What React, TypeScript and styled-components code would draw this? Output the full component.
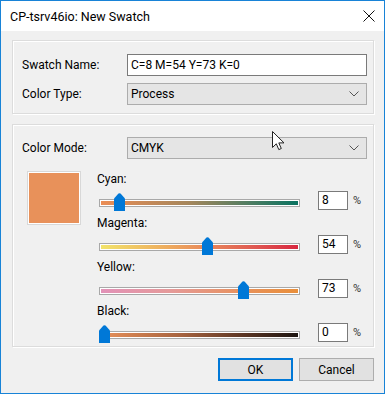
import React from "react";
import styled, { createGlobalStyle } from "styled-components";

const GlobalStyle = createGlobalStyle`
  html, body {
    margin: 0;
    padding: 0;
    background: #ffffff;
  }
  * {
    box-sizing: border-box;
  }
`;

const channels = [
  {
    name: "Cyan",
    value: 8,
    track: "linear-gradient(90deg, #ec8d55 0%, #a4865c 45%, #4f7d62 75%, #087260 100%)",
  },
  {
    name: "Magenta",
    value: 54,
    track: "linear-gradient(90deg, #f2e46a 0%, #eeaa5e 35%, #e8865a 55%, #e05852 78%, #d8263f 100%)",
  },
  {
    name: "Yellow",
    value: 73,
    track: "linear-gradient(90deg, #e292b8 0%, #e59a9a 35%, #e8915a 73%, #e98f3a 100%)",
  },
  {
    name: "Black",
    value: 0,
    track: "linear-gradient(90deg, #e8915a 0%, #a86440 40%, #5c3624 72%, #1b1410 100%)",
  },
];

const App: React.FC = () => {
  return (
    <>
      <GlobalStyle />
      <Window>
        <TitleBar>
          <Title>CP-tsrv46io: New Swatch</Title>
          <CloseIcon width="12" height="12" viewBox="0 0 12 12">
            <path d="M0.5 0.5 L11.5 11.5 M11.5 0.5 L0.5 11.5" stroke="#111" strokeWidth="1" />
          </CloseIcon>
        </TitleBar>
        <Body>
          <Group>
            <FieldRow>
              <Label>Swatch Name:</Label>
              <TextBox>C=8 M=54 Y=73 K=0</TextBox>
            </FieldRow>
            <FieldRow>
              <Label>Color Type:</Label>
              <Combo>
                Process
                <Chevron />
              </Combo>
            </FieldRow>
          </Group>

          <Group $second>
            <FieldRow>
              <Label>Color Mode:</Label>
              <Combo>
                CMYK
                <Chevron />
              </Combo>
            </FieldRow>
            <Mixer>
              <Swatch />
              <Sliders>
                {channels.map((c) => (
                  <Channel key={c.name}>
                    <ChannelLabel>{c.name}:</ChannelLabel>
                    <ControlRow>
                      <Slider>
                        <Track style={{ background: c.track }} />
                        <Thumb
                          viewBox="0 0 11 18"
                          style={{ left: `${(c.value / 100) * 190}px` }}
                        >
                          <path d="M0 5.5 L4.5 0.6 Q5.5 -0.3 6.5 0.6 L11 5.5 V18 H0 Z" fill="#0078d7" />
                        </Thumb>
                      </Slider>
                      <ValueBox>{c.value}</ValueBox>
                      <Percent>%</Percent>
                    </ControlRow>
                  </Channel>
                ))}
              </Sliders>
            </Mixer>
          </Group>

          <Buttons>
            <Button $primary>OK</Button>
            <Button>Cancel</Button>
          </Buttons>
        </Body>

        <Cursor width="13" height="20" viewBox="0 0 13 20">
          <path
            d="M0.5 0.5 V16.5 L4.3 12.8 L6.8 18.6 L9.3 17.5 L6.8 11.9 H12 Z"
            fill="#ffffff"
            stroke="#222"
            strokeWidth="1"
            strokeLinejoin="round"
          />
        </Cursor>
      </Window>
    </>
  );
};

export default App;

function Chevron() {
  return (
    <ChevronIcon width="10" height="6" viewBox="0 0 10 6">
      <path d="M0.5 0.5 L5 5 L9.5 0.5" fill="none" stroke="#555" strokeWidth="1" />
    </ChevronIcon>
  );
}

const Window = styled.div`
  position: relative;
  width: 385px;
  height: 394px;
  border: 1px solid #1883d7;
  display: flex;
  flex-direction: column;
  font-family: "Segoe UI", Roboto, "Liberation Sans", sans-serif;
  font-size: 12px;
  color: #000;
  overflow: hidden;
`;

const TitleBar = styled.div`
  height: 30px;
  background: #ffffff;
  display: flex;
  align-items: center;
  justify-content: space-between;
  padding: 0 9px 0 9px;
`;

const Title = styled.div`
  font-size: 12.5px;
  color: #000;
`;

const CloseIcon = styled.svg`
  display: block;
  margin-right: 0;
`;

const Body = styled.div`
  flex: 1;
  background: #f0f0f0;
  padding: 9px 10px 0 11px;
  display: flex;
  flex-direction: column;
`;

const Group = styled.div<{ $second?: boolean }>`
  border: 1px solid #dcdcdc;
  box-shadow: inset 1px 1px 0 #ffffff, 1px 1px 0 #ffffff;
  padding: ${(p) => (p.$second ? "12px 6px 3px 9px" : "13px 6px 8px 9px")};
  margin-top: ${(p) => (p.$second ? "10px" : "0")};
  display: flex;
  flex-direction: column;
  gap: 7px;
`;

const FieldRow = styled.div`
  display: grid;
  grid-template-columns: 105px 1fr;
  align-items: center;
  height: 22px;
`;

const Label = styled.div`
  color: #000;
`;

const TextBox = styled.div`
  height: 22px;
  border: 1px solid #7a7a7a;
  background: #ffffff;
  padding: 0 3px;
  display: flex;
  align-items: center;
`;

const Combo = styled.div`
  height: 22px;
  border: 1px solid #acacac;
  background: #e5e5e5;
  padding: 0 3px;
  display: flex;
  align-items: center;
  justify-content: space-between;
`;

const ChevronIcon = styled.svg`
  display: block;
  margin-right: 4px;
`;

const Mixer = styled.div`
  display: flex;
  align-items: flex-start;
  margin-top: 5px;
`;

const Swatch = styled.div`
  width: 52px;
  height: 52px;
  margin-left: 6px;
  margin-top: 1px;
  background: #e8915a;
  border: 1px solid #ffffff;
  outline: 1px solid #d8d8d8;
`;

const Sliders = styled.div`
  margin-left: 17px;
  display: flex;
  flex-direction: column;
  gap: 4px;
`;

const Channel = styled.div`
  display: flex;
  flex-direction: column;
  gap: 2px;
`;

const ChannelLabel = styled.div`
  height: 16px;
  line-height: 16px;
`;

const ControlRow = styled.div`
  display: flex;
  align-items: center;
  height: 22px;
  padding-left: 2px;
`;

const Slider = styled.div`
  position: relative;
  width: 201px;
  height: 22px;
`;

const Track = styled.div`
  position: absolute;
  left: 0;
  right: 0;
  top: 10px;
  height: 8px;
  border: 1px solid #a8a8a8;
  box-shadow: inset 0 0 0 1px #ffffff;
`;

const Thumb = styled.svg`
  position: absolute;
  top: 4px;
  width: 11px;
  height: 18px;
`;

const ValueBox = styled.div`
  width: 30px;
  height: 19px;
  margin-left: 18px;
  border: 1px solid #7a7a7a;
  background: #ffffff;
  padding: 0 3px;
  display: flex;
  align-items: center;
`;

const Percent = styled.div`
  margin-left: 5px;
  color: #333;
  font-size: 11px;
`;

const Buttons = styled.div`
  display: flex;
  justify-content: flex-end;
  gap: 6px;
  margin-top: 11px;
`;

const Button = styled.div<{ $primary?: boolean }>`
  width: 75px;
  height: 23px;
  display: flex;
  align-items: center;
  justify-content: center;
  background: #e1e1e1;
  border: ${(p) => (p.$primary ? "2px solid #0078d7" : "1px solid #adadad")};
  color: #000;
`;

const Cursor = styled.svg`
  position: absolute;
  left: 271px;
  top: 130px;
`;
